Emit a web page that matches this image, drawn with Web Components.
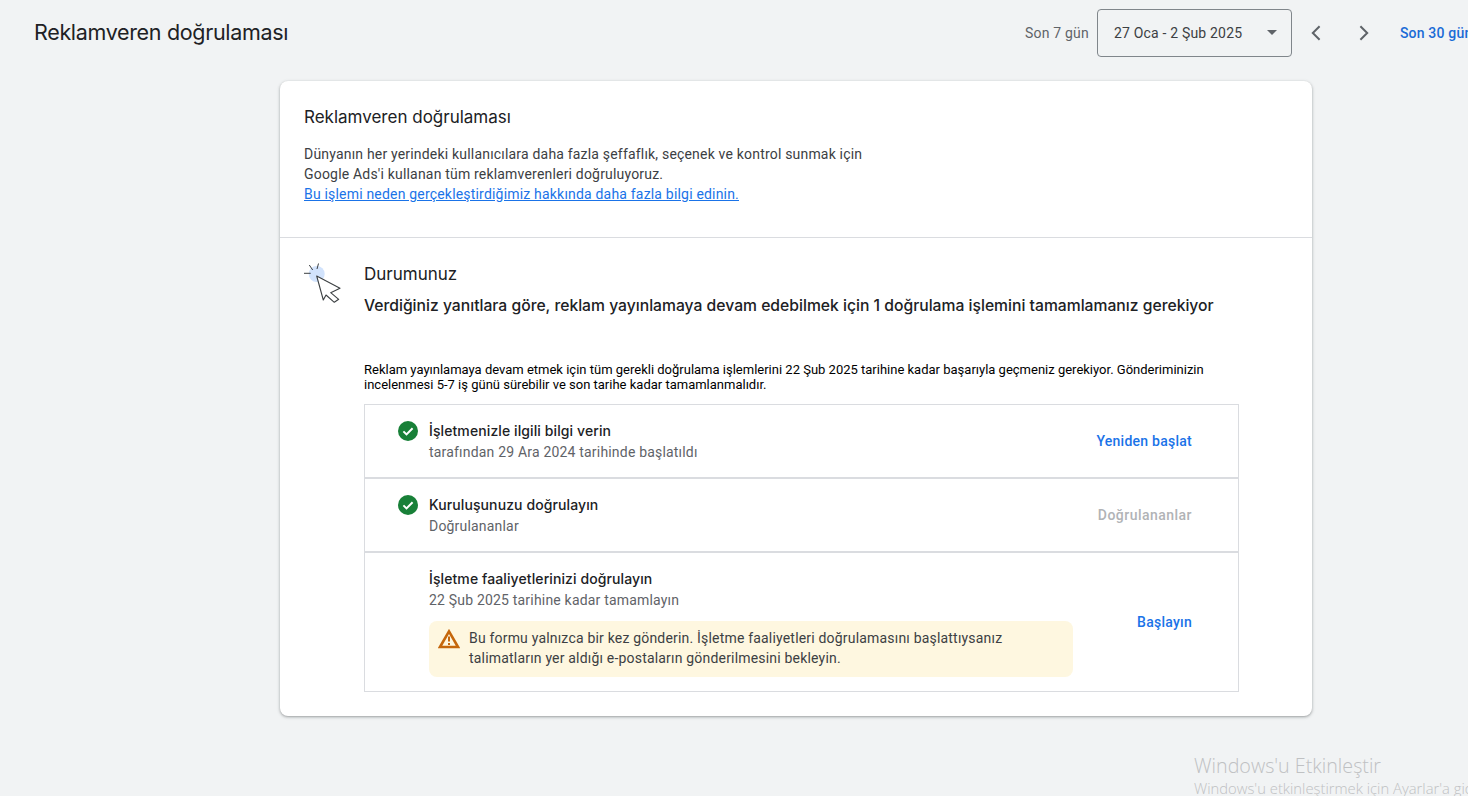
<!DOCTYPE html>
<html lang="tr">
<head>
<meta charset="utf-8">
<title>Reklamveren doğrulaması</title>
<style>
    html, body { margin: 0; height: 100%; overflow: hidden; }
    body { background: #f1f3f4; font-family: Roboto, "Liberation Sans", sans-serif; color: #202124; }
</style>
</head>
<body>
<page-header title-text="Reklamveren doğrulaması"></page-header>
<verify-card>
    <step-row slot="steps" heading="İşletmenizle ilgili bilgi verin" sub="tarafından 29 Ara 2024 tarihinde başlatıldı" action="Yeniden başlat" done></step-row>
    <step-row slot="steps" heading="Kuruluşunuzu doğrulayın" sub="Doğrulananlar" action="Doğrulananlar" done disabled></step-row>
    <step-row slot="steps" heading="İşletme faaliyetlerinizi doğrulayın" sub="22 Şub 2025 tarihine kadar tamamlayın" action="Başlayın" last>
        <warn-note>Bu formu yalnızca bir kez gönderin. İşletme faaliyetleri doğrulamasını başlattıysanız<br>talimatların yer aldığı e-postaların gönderilmesini bekleyin.</warn-note>
    </step-row>
</verify-card>
<activation-mark></activation-mark>

<script>
const TITLE_FONT = `Inter, "Noto Sans", sans-serif`

class PageHeader extends HTMLElement
{
    constructor()
    {
        super()
        const shadow = this.attachShadow({mode:"open"})
        shadow.innerHTML = `
        <style>
            :host { display: flex; align-items: center; height: 65px; padding-left: 34px; white-space: nowrap; letter-spacing: .19px; }
            h1 { flex: 0 0 991px; margin: 0 0 2px; font: 400 21.5px/28px ${TITLE_FONT}; letter-spacing: -.33px; color: #202124; }
            .label { font-size: 14px; color: #5f6368; margin-right: 8px; }
            .range { box-sizing: border-box; display: flex; align-items: center; justify-content: space-between; flex: none; width: 195px; height: 48px; padding: 0 14px 0 16px; border: 1px solid #80868b; border-radius: 4px; font-size: 14px; color: #3c4043; }
            .caret { width: 0; height: 0; border: 5px solid transparent; border-top-color: #5f6368; border-bottom: 0; }
            .nav { display: flex; flex: none; }
            .nav button { display: grid; place-items: center; width: 48px; height: 48px; padding: 0; border: 0; background: none; }
            a { margin-left: 12px; font-size: 14px; font-weight: 500; color: #1a6bd6; }
        </style>
        <h1></h1>
        <span class="label">Son 7 gün</span>
        <div class="range"><span>27 Oca - 2 Şub 2025</span><i class="caret"></i></div>
        <div class="nav">
            <button><svg width="24" height="24" viewBox="0 0 24 24"><path d="M15.6 5.2 8.8 12l6.8 6.8" fill="none" stroke="#5f6368" stroke-width="2"/></svg></button>
            <button><svg width="24" height="24" viewBox="0 0 24 24"><path d="M8.4 5.2 15.2 12l-6.8 6.8" fill="none" stroke="#5f6368" stroke-width="2"/></svg></button>
        </div>
        <a>Son 30 gün</a>`
        shadow.querySelector("h1").textContent = this.getAttribute("title-text")
    }
}

class VerifyCard extends HTMLElement
{
    constructor()
    {
        super()
        const shadow = this.attachShadow({mode:"open"})
        shadow.innerHTML = `
        <style>
            :host { display: block; box-sizing: border-box; width: 1032px; height: 635px; margin: 16px 0 0 280px; background: #fff; border-radius: 8px; box-shadow: 0 1px 2px rgba(60,64,67,.3), 0 1px 3px 1px rgba(60,64,67,.15); }
            .intro { box-sizing: border-box; height: 157px; padding: 24px 24px 0; border-bottom: 1px solid #dadce0; }
            h2 { margin: 0 0 15px; font: 400 17px/24px ${TITLE_FONT}; color: #202124; }
            p { margin: 0; font-size: 14px; line-height: 20px; letter-spacing: .19px; color: #3c4043; }
            a { color: #1a73e8; text-decoration: underline; }
            .status { display: flex; padding: 24px 73px 0 24px; }
            .cursor { flex: none; width: 38px; height: 42px; margin-right: 22px; }
            .body { flex: 1; min-width: 0; }
            h3 { margin: 0 0 8px; font: 400 17px/24px ${TITLE_FONT}; color: #202124; }
            h4 { margin: 0 0 44px; font: 500 15.7px/24px ${TITLE_FONT}; color: #202124; white-space: nowrap; }
            p.notice { margin: 0 0 12px; font-size: 13px; line-height: 15px; letter-spacing: 0; color: #000; }
            .steps { border: 1px solid #dadce0; }
        </style>
        <section class="intro">
            <h2>Reklamveren doğrulaması</h2>
            <p>Dünyanın her yerindeki kullanıcılara daha fazla şeffaflık, seçenek ve kontrol sunmak için<br>Google Ads'i kullanan tüm reklamverenleri doğruluyoruz.<br><a>Bu işlemi neden gerçekleştirdiğimiz hakkında daha fazla bilgi edinin.</a></p>
        </section>
        <section class="status">
            <svg class="cursor" viewBox="0 0 38 42">
                <circle cx="12.7" cy="12" r="8" fill="#d2e3fc"/>
                <path d="M12.7 14 36 26.3 26.7 30.7 34.7 37.3 30.3 40.3 22 33 19.3 38z" fill="#fff" stroke="#3c4043" stroke-width="1.1" stroke-linejoin="round"/>
                <path d="M14.5 1.5 13 7M5.3 3 8.7 8M0 11.3h6.7" fill="none" stroke="#3c4043" stroke-width="1"/>
            </svg>
            <div class="body">
                <h3>Durumunuz</h3>
                <h4>Verdiğiniz yanıtlara göre, reklam yayınlamaya devam edebilmek için 1 doğrulama işlemini tamamlamanız gerekiyor</h4>
                <p class="notice">Reklam yayınlamaya devam etmek için tüm gerekli doğrulama işlemlerini 22 Şub 2025 tarihine kadar başarıyla geçmeniz gerekiyor. Gönderiminizin incelenmesi 5-7 iş günü sürebilir ve son tarihe kadar tamamlanmalıdır.</p>
                <div class="steps"><slot name="steps"></slot></div>
            </div>
        </section>`
    }
}

class StepRow extends HTMLElement
{
    constructor()
    {
        super()
        const shadow = this.attachShadow({mode:"open"})
        shadow.innerHTML = `
        <style>
            :host { display: flex; box-sizing: border-box; padding: 0 46px 0 33px; min-height: 74px; border-bottom: 2px solid #dadce0; }
            :host([last]) { border-bottom: 0; }
            :host([last]) .main { padding-bottom: 14px; }
            .check { flex: none; width: 20px; height: 20px; margin: 16px 11px 0 0; }
            .check svg { display: block; }
            :host(:not([done])) .check { visibility: hidden; }
            .main { flex: 1; min-width: 0; padding-top: 15px; }
            .heading { font: 500 14px/22px ${TITLE_FONT}; letter-spacing: .1px; color: #202124; }
            .sub { font-size: 14px; line-height: 20px; letter-spacing: .19px; color: #5f6368; }
            ::slotted(warn-note) { margin-top: 11px; }
            .action { flex: none; align-self: center; margin-left: 65px; font-size: 14px; font-weight: 500; letter-spacing: .25px; color: #1a73e8; white-space: nowrap; }
            :host([disabled]) .action { color: #b1b3b6; letter-spacing: .47px; }
        </style>
        <div class="check"><svg width="20" height="20" viewBox="0 0 20 20"><circle cx="10" cy="10" r="10" fill="#188038"/><path d="M5.4 10.4 8.5 13.4 14.6 7.2" fill="none" stroke="#fff" stroke-width="2"/></svg></div>
        <div class="main">
            <div class="heading"></div>
            <div class="sub"></div>
            <slot></slot>
        </div>
        <div class="action"></div>`
        shadow.querySelector(".heading").textContent = this.getAttribute("heading")
        shadow.querySelector(".sub").textContent = this.getAttribute("sub")
        shadow.querySelector(".action").textContent = this.getAttribute("action")
    }
}

class WarnNote extends HTMLElement
{
    constructor()
    {
        super()
        const shadow = this.attachShadow({mode:"open"})
        shadow.innerHTML = `
        <style>
            :host { display: flex; box-sizing: border-box; width: 644px; height: 56px; padding: 7px 10px 0 9px; background: #fef7e0; border-radius: 8px; font-size: 14px; line-height: 20px; letter-spacing: .19px; color: #3c4043; }
            svg { flex: none; margin: 1px 9px 0 0; }
        </style>
        <svg width="22" height="20" viewBox="0 0 22 20">
            <path d="M11 2.4 20 18H2z" fill="none" stroke="#c5670c" stroke-width="2.6"/>
            <path d="M10 7.5h2v5h-2zM10 14h2v2h-2z" fill="#c5670c"/>
        </svg>
        <div><slot></slot></div>`
    }
}

class ActivationMark extends HTMLElement
{
    constructor()
    {
        super()
        const shadow = this.attachShadow({mode:"open"})
        shadow.innerHTML = `
        <style>
            :host { position: absolute; left: 1194px; top: 753px; white-space: nowrap; font-family: "Open Sans", sans-serif; font-weight: 300; color: #bfc1c3; }
            .big { font-size: 19.7px; line-height: 26px; }
            .small { font-size: 14.8px; line-height: 19px; }
        </style>
        <div class="big">Windows'u Etkinleştir</div>
        <div class="small">Windows'u etkinleştirmek için Ayarlar'a gidin.</div>`
    }
}

customElements.define("page-header", PageHeader)
customElements.define("verify-card", VerifyCard)
customElements.define("step-row", StepRow)
customElements.define("warn-note", WarnNote)
customElements.define("activation-mark", ActivationMark)
</script>
</body>
</html>
